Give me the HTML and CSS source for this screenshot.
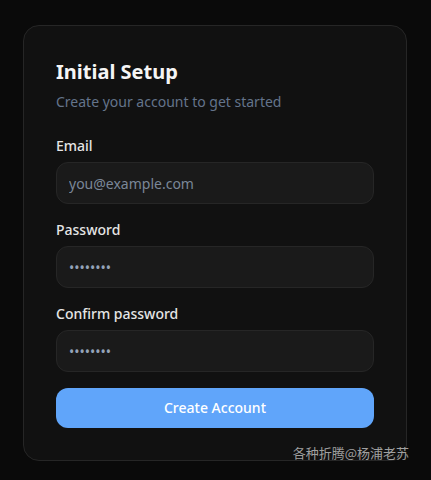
FILE: index.html
```html
<!DOCTYPE html>
<html lang="en">
<head>
<meta charset="utf-8">
<title>Initial Setup</title>
<link rel="stylesheet" href="styles.css">
</head>
<body>
<main class="page">
  <section class="card">
    <header class="head">
      <h1 class="title">Initial Setup</h1>
      <p class="subtitle">Create your account to get started</p>
    </header>
    <form class="form">
      <div class="field">
        <label class="label" for="email">Email</label>
        <input class="input" id="email" type="email" placeholder="you@example.com">
      </div>
      <div class="field">
        <label class="label" for="pw">Password</label>
        <input class="input" id="pw" type="password" value="password">
      </div>
      <div class="field">
        <label class="label" for="pw2">Confirm password</label>
        <input class="input" id="pw2" type="password" value="password">
      </div>
      <button class="btn" type="button">Create Account</button>
    </form>
  </section>
</main>
<div class="watermark">各种折腾@杨浦老苏</div>
</body>
</html>
```

FILE: styles.css
```css
html, body {
  margin: 0;
  padding: 0;
  background: #0a0a0a;
  height: 100%;
}
body {
  font-family: "Noto Sans", "Noto Sans CJK SC", sans-serif;
  color: #f5f5f5;
  position: relative;
  overflow: hidden;
}
.page {
  display: flex;
  justify-content: flex-start;
  padding: 25px 24px 0 23px;
}
.card {
  width: 384px;
  box-sizing: border-box;
  background: #111111;
  border: 1px solid #262626;
  border-radius: 16px;
  padding: 32px;
}
.head {
  margin-bottom: 24px;
}
.title {
  margin: 0;
  font-size: 20px;
  line-height: 28px;
  font-weight: 700;
  color: #f5f5f5;
}
.subtitle {
  margin: 6px 0 0;
  font-size: 14px;
  line-height: 20px;
  color: #64748b;
}
.form {
  display: flex;
  flex-direction: column;
  gap: 16px;
}
.field {
  display: flex;
  flex-direction: column;
  gap: 6px;
}
.label {
  font-size: 14px;
  line-height: 20px;
  font-weight: 500;
  color: #e5e5e5;
}
.input {
  box-sizing: border-box;
  width: 100%;
  height: 42px;
  margin: 0;
  padding: 10px 12px;
  background: #1a1a1a;
  border: 1px solid #262626;
  border-radius: 12px;
  font-family: "Noto Sans", sans-serif;
  font-size: 14px;
  line-height: 20px;
  color: #94a3b8;
  outline: none;
}
.input::placeholder {
  color: #7a8798;
}
.btn {
  height: 40px;
  margin: 0;
  border: none;
  border-radius: 12px;
  background: #60a5fa;
  color: #ffffff;
  font-family: "Noto Sans", sans-serif;
  font-size: 14px;
  line-height: 20px;
  font-weight: 500;
}
.watermark {
  position: absolute;
  right: 22px;
  top: 444px;
  font-family: "Noto Sans CJK SC", sans-serif;
  font-size: 13px;
  line-height: 18px;
  color: #a0a0a0;
  white-space: nowrap;
}
```
